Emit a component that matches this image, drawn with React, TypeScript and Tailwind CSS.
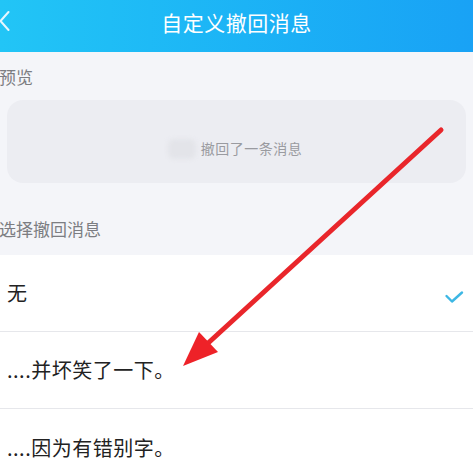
import React from 'react';

const font = { fontFamily: '"Noto Sans CJK SC", "Noto Sans", sans-serif' };

const options = ['无', '....并坏笑了一下。', '....因为有错别字。'];

const App: React.FC = () => {
  return (
    <div className="relative w-[473px] h-[459px] overflow-hidden bg-[#f4f5f9]" style={font}>
      {/* header */}
      <div className="relative h-[52px] flex items-center justify-center bg-gradient-to-r from-[#22c5f6] to-[#19a2f5]">
        <svg className="absolute left-0 top-[10px]" width="10" height="22" viewBox="0 0 10 22">
          <path d="M8.5 2 L0.5 11 L8.5 20" fill="none" stroke="#e6f7ff" strokeWidth="2" strokeLinecap="round" strokeLinejoin="round" />
        </svg>
        <h1 className="text-[21px] text-white leading-none -mt-[8px] tracking-[0.5px]">自定义撤回消息</h1>
      </div>

      {/* preview */}
      <div className="h-[48px] flex items-center">
        <span className="text-[17px] text-[#7c7d82] -ml-[1px] pt-[2px]">预览</span>
      </div>
      <div className="mx-[7px] h-[83px] rounded-[16px] bg-[#ecedf2] flex items-center justify-center pt-[14px]">
        <div className="flex items-center gap-[5px] -ml-[3px]">
          <div className="w-[28px] h-[20px] rounded-[6px] bg-[#e3e4e9] blur-[2px]" />
          <span className="text-[14px] text-[#9a9ba0] tracking-[0.5px]">撤回了一条消息</span>
        </div>
      </div>

      {/* choose */}
      <div className="h-[72px] flex items-end pb-[14px]">
        <span className="text-[17px] text-[#7c7d82] -ml-[1px]">选择撤回消息</span>
      </div>
      <div className="bg-white">
        {options.map((o, i) => (
          <div
            key={o}
            className={`h-[77px] flex items-center justify-between pl-[7px] pr-[9px] ${i < options.length - 1 ? 'border-b border-[#e6e7eb]' : ''}`}
          >
            <span className="text-[20px] text-[#222] tracking-[0.5px]">{o}</span>
            {i === 0 && (
              <svg width="20" height="14" viewBox="0 0 20 14" className="mt-[8px]">
                <path d="M2.5 6 L8 11.5 L18 2.5" fill="none" stroke="#3db7e4" strokeWidth="2.4" strokeLinecap="round" strokeLinejoin="round" />
              </svg>
            )}
          </div>
        ))}
      </div>

      {/* red arrow overlay */}
      <svg className="absolute inset-0 pointer-events-none" width="473" height="459" viewBox="0 0 473 459">
        <line x1="441" y1="130" x2="206" y2="345" stroke="#e9262b" strokeWidth="5" strokeLinecap="round" />
        <polygon points="183,366 199,332 218,352" fill="#ee2228" />
      </svg>
    </div>
  );
};

export default App;
